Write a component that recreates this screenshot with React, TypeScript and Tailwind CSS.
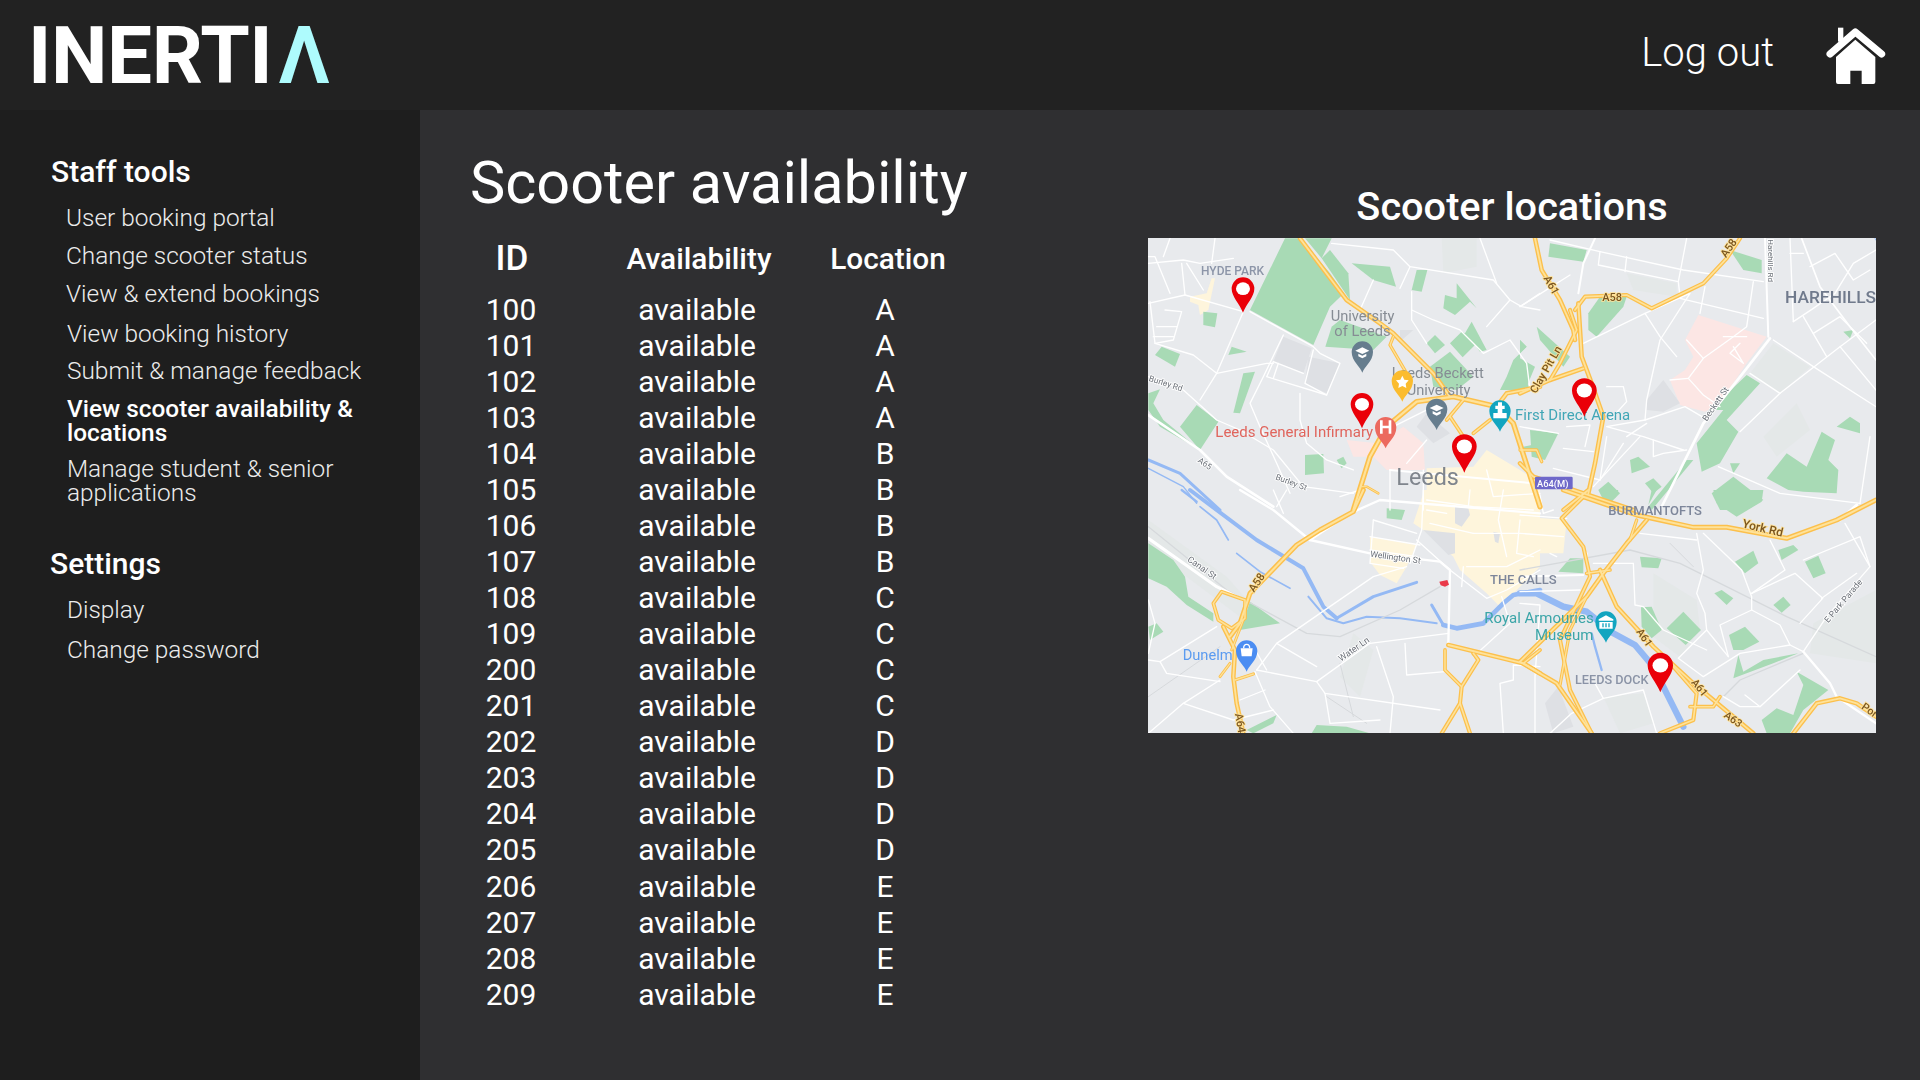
import React from "react";

const T: Record<string, string> = {
  a: "translate(-8 -8) scale(.33333)",
  b: "translate(372 -8) scale(.33333)",
  c: "translate(-8 252) scale(.33333)",
  d: "translate(372 252) scale(.33333)",
};
type Q = Partial<Record<"a" | "b" | "c" | "d", string[]>>;

const poly = (s: string) => "M" + s.trim().split(/\s+/).join(" L") + " Z";

const pale: Q = {
  a: [poly("905,25 1010,25 1010,110 910,130")],
  b: [poly("690,430 780,490 870,410 760,340"), poly("730,620 830,520 870,600 770,680"), poly("320,130 470,160 470,200 340,180")],
  c: [poly("25,90 260,260 330,340 300,380 140,260 25,170"), poly("640,430 700,480 660,620 600,560")],
  d: [poly("400,250 530,330 540,420 480,500 400,440"), poly("250,620 370,610 400,700 300,730"), poly("880,400 1068,300 1068,520 870,490")],
};
const green: Q = {
  a: [
    poly("435,25 480,25 570,130 612,190 570,230 520,345 330,240"),
    poly("495,25 575,25 545,85"),
    poly("545,85 570,60 625,130 630,210"),
    poly("575,290 600,270 740,320 700,360 556,350"),
    poly("190,245 232,250 225,292 190,285"),
    poly("265,375 275,350 320,365"),
    poly("45,375 65,350 120,372 105,410"),
    poly("310,430 345,425 300,550 280,548"),
    poly("25,490 60,478 40,520 70,570 180,660 120,590 170,525 235,575 180,660 60,590 25,540"),
    poly("495,675 550,672 552,730 495,735"),
    poly("590,690 610,680 620,700 605,715"),
    poly("635,100 750,110 768,170 700,150"),
    poly("830,120 862,120 845,185 815,180"),
    poly("915,195 950,205 950,160 1010,235 990,215 945,255 910,235"),
    poly("885,315 915,345 885,370 860,340"),
    poly("965,305 975,310 995,275 1040,360 1020,365 1005,345 968,382 930,340"),
    poly("930,365 1000,440 950,480 880,470 870,410"),
    poly("1140,330 1160,350 1120,390 1100,440 1080,480 1170,480 1140,400"),
    poly("1150,650 1200,640 1200,660 1150,660"),
  ],
  b: [
    poly("90,40 200,60 190,95 85,80"),
    poly("205,250 240,200 320,200 310,230 230,320 205,300"),
    poly("630,60 725,90 725,130 670,120"),
    poly("0,330 20,350 0,370"),
    poly("50,290 150,380 130,410 60,330"),
    poly("0,385 45,410 20,470 0,470"),
    poly("530,640 610,540 570,540 680,435 720,460 620,570 655,605 600,700 545,725"),
    poly("950,590 990,560 1020,580 1020,610"),
    poly("800,670 860,710 905,605 945,630 925,690 955,720 950,790 850,785 805,780 740,745"),
    poly("575,790 640,740 730,810 680,840 600,840"),
    poly("970,305 1000,300 990,325"),
    poly("330,690 355,680 390,710 335,730"),
    poly("30,600 115,610 75,690 35,680"),
    poly("235,780 265,755 300,790 260,830"),
    poly("375,760 400,745 425,770 400,790"),
    poly("500,690 520,690 395,840 385,830"),
    poly("630,700 660,700 640,730"),
  ],
  c: [
    poly("25,160 100,210 135,260 145,320 220,370 220,395 140,345 80,290 25,265"),
    poly("330,335 420,400 300,420"),
    poly("25,410 50,400 70,425 30,450"),
    poly("740,55 795,60 785,90 740,85"),
    poly("515,730 530,705 620,710 690,730"),
    poly("320,720 410,675 400,700 340,730"),
  ],
  d: [
    poly("580,0 730,0 725,35 650,80 590,40"),
    poly("270,0 295,0 285,25"),
    poly("395,0 410,0 385,45"),
    poly("645,215 700,182 715,220 675,250"),
    poly("775,180 820,165 835,180 785,210"),
    poly("855,215 895,197 917,250 880,265"),
    poly("360,200 425,205 415,235 365,232"),
    poly("150,205 190,205 190,250 115,245"),
    poly("583,310 605,300 640,325 620,345"),
    poly("760,345 790,320 812,345 785,368"),
    poly("363,352 395,350 425,420 395,445 365,410"),
    poly("440,415 490,365 543,420 497,465"),
    poly("627,435 675,410 718,455 670,480 640,480"),
    poly("655,495 670,545 730,510 835,490 760,520 680,550 640,565"),
    poly("725,690 770,655 820,675 850,585 830,545 925,600 850,660 810,730 740,730"),
  ],
};
const pink: Q = {
  a: [poly("620,630 710,640 790,590 850,640 855,720 740,720 700,680 640,680")],
  b: [poly("535,255 740,320 680,400 600,520 555,545 480,525 450,450 495,420 520,380 495,330")],
};
const city: Q = {
  a: [
    poly("860,715 1000,710 1040,660 1090,690 1140,720 1200,760 1200,840 860,840"),
    poly("150,200 200,190 215,145 225,145 205,240 180,255 175,225 150,215"),
  ],
  b: [poly("0,740 40,750 40,840 0,840")],
  c: [
    poly("820,100 850,10 850,0 1200,0 1200,230 1080,350 1040,310 960,240 940,200 850,120"),
    poly("690,140 830,165 800,230 770,280 720,255 690,215"),
  ],
  d: [
    poly("0,0 30,0 40,60 0,70"),
    poly("0,80 140,90 130,190 0,190"),
    poly("0,190 30,200 20,250 0,250"),
  ],
};
const grey: Q = {
  a: [poly("430,320 515,355 490,430 400,395"), poly("505,380 600,400 560,490 495,460"), poly("780,300 820,300 780,335"), poly("860,550 930,610 880,640 830,590")],
  b: [poly("380,510 430,450 480,520 430,545 380,540")],
  c: [
    poly("945,50 985,55 990,75 965,110 945,100"),
    poly("850,120 945,130 945,190 925,195"),
    poly("1060,125 1080,130 1075,160 1065,155"),
  ],
  d: [poly("75,640 115,590 160,710 100,730")],
};

const water: [string, string, number][] = [
  ["c", "M125,0 L170,35", 7],
  ["c", "M150,0 L350,150 L490,235 L550,350 L590,385", 12],
  ["c", "M590,385 L700,320 L830,277", 9],
  ["c", "M180,50 L230,90 L265,150", 5],
  ["c", "M290,190 L360,245 L450,295", 5],
  ["c", "M505,320 L560,385 L610,400 L680,380 L780,385 L890,400", 6],
  ["c", "M875,345 L910,405", 9],
  ["c", "M910,405 L950,415 L1030,400 L1090,340 L1120,315 L1200,300", 14],
  ["a", "M25,690 L120,730 L240,840", 9],
  ["a", "M25,715 L130,770 L170,820", 4],
  ["d", "M0,310 L50,310 L130,350 L200,365 L280,430 L345,465 L400,530 L440,610 L490,710", 19],
  ["d", "M215,430 L225,470 L245,540", 7],
  ["b", "M1065,25 L1095,75", 3],
];

const rail: [string, string, number][] = [
  ["c", "M25,110 L260,300 L500,430 L600,440 L780,360 L900,290", 4],
  ["c", "M560,620 L680,700", 3],
  ["c", "M600,520 L640,680", 3],
  ["c", "M25,620 L240,470", 3],
  ["d", "M0,240 L330,180 L480,220 L800,380 L1068,500", 4],
  ["d", "M450,160 L520,230", 3],
  ["d", "M610,620 L660,570 L850,490", 4],
];

const thin: Q = {
  a: [
    "M330,245 L520,350 L540,370 L600,400 L560,495 L495,460 L520,360",
    "M310,245 L230,430 L180,510",
    "M430,315 L370,440 L330,520 L360,590 L410,700 L450,790",
    "M490,430 L400,395 L380,440 L560,495",
    "M415,400 L400,445",
    "M25,100 L130,90 L180,100 L280,85",
    "M125,100 L135,195 L310,245",
    "M25,220 L135,195",
    "M25,80 L45,80 L90,190",
    "M90,25 L70,80",
    "M225,25 L215,100",
    "M30,215 L45,340 L160,375 L230,430",
    "M75,240 L125,245 L100,330 L45,340",
    "M50,290 L110,290",
    "M40,320 L100,320",
    "M140,100 L190,180",
    "M575,40 L760,60 L810,110 L1060,150 L1110,210 L1145,230 L1200,240",
    "M810,110 L780,175",
    "M700,150 L660,240",
    "M1020,25 L1070,160",
    "M815,185 L815,270 L860,340",
    "M815,240 L880,270 L960,300 L1030,370 L1110,330 L1160,400 L1170,480",
    "M1110,210 L1040,290",
    "M1140,230 L1200,190",
    "M480,490 L480,570 L500,640 L560,690 L640,720",
    "M25,440 L130,480 L230,570 L300,600 L400,660 L490,770 L640,790",
    "M230,430 L380,400 L400,400",
    "M860,630 L800,700",
    "M880,530 L760,590",
    "M750,720 L750,840",
    "M850,720 L850,840",
    "M1040,720 L1060,800 L1200,790",
  ],
  b: [
    "M90,30 L240,65 L490,120 L730,155",
    "M240,65 L235,105 L475,155",
    "M320,80 L315,125",
    "M500,25 L475,155 L480,200",
    "M555,170 L540,250",
    "M480,205 L730,265",
    "M700,155 L680,290 L640,320 L550,385 L505,445 L550,495 L600,530",
    "M610,320 L680,320",
    "M640,350 L670,400 L630,370 L660,340",
    "M500,330 L550,385",
    "M505,445 L450,450",
    "M190,340 L375,250 L420,320 L470,380",
    "M375,250 L510,190 L420,330 L380,510 L375,570 L495,530 L555,565",
    "M375,570 L260,590 L370,620 L490,660",
    "M760,330 L880,410 L1068,530",
    "M660,605 L780,490 L960,350 L1068,270",
    "M690,430 L780,490",
    "M820,275 L880,235 L945,190 L1000,100 L1068,60",
    "M850,260 L920,380",
    "M880,310 L960,260 L1040,340",
    "M960,350 L1068,480",
    "M810,25 L820,275",
    "M810,70 L850,70",
    "M870,110 L945,70 L1000,150 L1050,120",
    "M595,710 L780,790 L1020,820",
    "M0,230 L150,135",
    "M140,590 L210,585 L195,650",
    "M0,590 L115,610",
    "M130,655 L220,665",
    "M100,715 L240,750 L260,620",
    "M240,750 L310,640",
    "M320,620 L380,580",
    "M360,620 L220,770",
    "M400,630 L400,680 L430,670 L500,660",
    "M260,470 L310,470 L320,515 L270,570",
    "M1050,620 L1020,820",
  ],
  c: [
    "M400,0 L430,70",
    "M600,20 L660,0",
    "M850,0 L845,120 L810,220",
    "M830,150 L930,240 L1040,325 L1100,300 L1200,240",
    "M540,370 L700,260 L800,230",
    "M540,370 L410,460 L350,540",
    "M350,540 L530,575 L690,460 L925,430",
    "M25,510 L60,515 L230,410",
    "M60,515 L80,550 L240,575",
    "M240,570 L130,640 L25,730",
    "M345,545 L390,650 L460,730",
    "M130,640 L280,690 L400,660",
    "M300,630 L375,600",
    "M410,460 L530,530",
    "M710,470 L760,620 L750,730",
    "M795,460 L800,555 L915,545",
    "M530,575 L555,610 L900,660",
    "M555,610 L570,700 L720,690",
    "M1085,320 L1110,400 L1000,500",
    "M1200,530 L1120,525 L1120,570 L1080,580 L1090,730",
    "M700,90 L830,130",
    "M700,90 L690,220 L790,235",
    "M690,140 L840,165",
    "M690,180 L830,200",
    "M440,0 L410,50",
    "M340,470 L380,540",
    "M25,330 L45,400 L25,490",
    "M860,60 L920,70",
    "M860,30 L1000,50 L1180,60",
    "M1090,0 L1075,90 L1100,200",
    "M1140,90 L1130,190 L1180,200",
    "M980,230 L1100,230 L1200,180",
    "M970,230 L965,290",
    "M990,0 L985,50",
    "M1000,130 L1140,130",
    "M870,100 L1000,130",
  ],
  d: [
    "M975,100 L1050,230 L920,380 L850,485",
    "M530,130 L550,240 L530,310 L555,370 L560,420 L625,500",
    "M560,420 L475,505 L550,560 L660,490 L810,465 L850,485",
    "M550,130 L665,240 L695,320 L695,360 L600,405 L625,500",
    "M850,210 L1020,140 L1050,230",
    "M695,310 L825,250 L908,325 L840,400",
    "M750,150 L795,240 L695,310",
    "M905,325 L1010,250",
    "M695,360 L780,405 L810,465",
    "M340,220 L345,345 L370,350 L430,420 L560,480",
    "M220,220 L340,220",
    "M0,305 L180,300",
    "M0,340 L60,345 L45,560 L45,730",
    "M250,625 L370,600 L410,730",
    "M225,580 L250,625 L155,670 L90,730",
    "M610,620 L660,650 L720,650 L840,540",
    "M360,130 L530,150",
    "M675,615 L720,650",
    "M60,15 L70,70 L100,60",
    "M0,75 L140,85",
    "M0,130 L130,140",
    "M90,190 L110,200",
  ],
};
const thick: [string, string, number][] = [
  ["a", "M25,555 L180,660 L260,740 L400,830", 8],
  ["a", "M750,720 L1180,760", 6],
  ["b", "M750,325 L680,415 L550,580 L420,840", 8],
  ["b", "M735,25 L745,320", 6],
  ["b", "M845,25 L900,170 L990,290 L1068,390", 5],
  ["b", "M225,25 L190,100 L175,190", 6],
  ["c", "M25,145 L230,290 L310,330", 9],
  ["c", "M300,0 L400,60 L510,150 L690,190 L900,215 L930,240 L925,460", 7],
  ["c", "M510,150 L630,70 L720,30 L1200,70", 7],
  ["d", "M0,260 L190,255", 6],
  ["d", "M200,190 L205,250", 6],
  ["d", "M850,485 L930,580 L950,620 L1068,700", 7],
  ["d", "M1010,45 L960,90", 9],
];
const yellow: [string, string, number][] = [
  ["a", "M480,25 L620,210 L720,280 L760,310 L880,430 L930,500", 11],
  ["a", "M760,320 L750,345 L800,430", 8],
  ["a", "M640,840 L690,680 L740,590 L830,515 L940,500 L1070,530 L1120,580 L1200,830", 13],
  ["a", "M1070,530 L1100,490 L1200,470", 11],
  ["a", "M930,560 L970,620", 9],
  ["a", "M1000,610 L1050,570", 9],
  ["a", "M920,570 L970,510", 9],
  ["a", "M665,770 L680,770 L715,790", 6],
  ["b", "M45,25 L65,120 L120,210 L160,300 L165,330", 11],
  ["b", "M0,490 L90,450 L190,415", 11],
  ["b", "M175,220 L185,380 L215,460 L250,560 L225,700 L205,790", 11],
  ["b", "M165,240 L195,200 L320,195 L395,235 L550,160 L620,85 L660,25", 10],
  ["b", "M150,240 L170,300 L120,400 L90,450", 10],
  ["b", "M0,700 L40,740 L130,770 L340,840", 11],
  ["b", "M130,840 L205,780", 10],
  ["b", "M0,660 L50,660 L65,695", 8],
  ["c", "M670,0 L640,65 L540,120 L470,165 L330,310 L300,400 L270,440", 12],
  ["c", "M315,330 L245,305 L220,340 L235,390 L275,415 L315,385 L315,330", 9],
  ["c", "M250,410 L285,480 L280,560 L290,640 L310,730", 11],
  ["c", "M310,390 L275,480", 7],
  ["c", "M240,560 L270,520", 7],
  ["c", "M285,570 L340,552", 8],
  ["c", "M925,465 L1150,520 L1200,550", 11],
  ["c", "M915,480 L915,540 L965,590", 9],
  ["c", "M1000,490 L1015,510 L965,590 L960,640 L905,730", 10],
  ["c", "M960,640 L990,730", 10],
  ["c", "M1150,520 L1200,480", 9],
  ["d", "M130,0 L350,75 L520,112 L620,112 L800,145 L950,90 L1068,30", 12],
  ["d", "M190,20 L125,85 L190,170 L210,260 L120,450 L150,600 L215,730", 10],
  ["d", "M380,90 L320,160 L250,250 L200,320 L0,515", 11],
  ["d", "M200,250 L270,240", 9],
  ["d", "M240,240 L290,350 L400,470 L520,580 L700,730", 11],
  ["d", "M0,515 L110,580 L215,730", 11],
  ["d", "M120,585 L150,420 L200,320", 8],
  ["d", "M460,530 L530,610 L520,690 L420,730", 10],
  ["d", "M510,650 L580,650 L600,620", 9],
  ["d", "M820,730 L890,640 L960,625 L1010,640 L1068,680", 11],
  ["d", "M350,90 L330,150", 8],
];

function Fill({ q, color }: { q: Q; color: string }) {
  return (
    <>
      {Object.entries(q).map(([k, list]) => (
        <g key={k} transform={T[k]} fill={color}>
          {list!.map((d, i) => (
            <path key={i} d={d} />
          ))}
        </g>
      ))}
    </>
  );
}

function Strokes({ list, color, k = 1 }: { list: [string, string, number][]; color: string; k?: number }) {
  return (
    <>
      {list.map(([q, d, w], i) => (
        <path key={i} transform={T[q]} d={d} fill="none" stroke={color} strokeWidth={w * k} strokeLinejoin="round" strokeLinecap="round" />
      ))}
    </>
  );
}

function Pin({ q, x, y, s = 1 }: { q: string; x: number; y: number; s?: number }) {
  return (
    <g transform={T[q]}>
      <g transform={`translate(${x} ${y}) scale(${s})`}>
        <path d="M0,0 C-10,-27 -34,-48 -34,-72 A34,34 0 1 1 34,-72 C34,-48 10,-27 0,0Z" fill="#ea0009" />
        <ellipse cx="0" cy="-72" rx="21" ry="19" fill="#fff" />
      </g>
    </g>
  );
}

function Poi({ q, x, y, color, children }: { q: string; x: number; y: number; color: string; children?: React.ReactNode }) {
  return (
    <g transform={T[q]}>
      <g transform={`translate(${x} ${y})`}>
        <path d="M0,0 C-4,-16 -32,-34 -32,-62 A32,32 0 1 1 32,-62 C32,-34 4,-16 0,0Z" fill={color} />
        {children}
      </g>
    </g>
  );
}

const Cap = () => (
  <g fill="#fff">
    <path d="M-21,-66 L0,-76 L21,-66 L0,-56Z" />
    <path d="M-12,-57 L0,-51 L12,-57 L12,-49 L0,-43 L-12,-49Z" />
  </g>
);

type L = [string, string, number, number, number, string, number?, number?];
const labels: L[] = [
  ["a", "Burley Rd", 25, 452, 25, "#6b7078", 18],
  ["a", "A65", 172, 695, 25, "#6b7078", 35],
  ["a", "Burley St", 405, 748, 25, "#6b7078", 20],
  ["c", "Canal St", 140, 212, 27, "#6b7078", 35],
  ["c", "Wellington St", 690, 200, 26, "#6b7078", 8],
  ["c", "Water Ln", 603, 515, 27, "#6b7078", -35],
  ["b", "Beckett St", 560, 575, 26, "#6b7078", -55],
  ["b", "Harehills Rd", 745, 28, 24, "#6b7078", 90],
  ["d", "E Park Parade", 925, 400, 26, "#6b7078", -50],
];
const brown: L[] = [
  ["b", "A61", 70, 145, 33, "#7a5520", 60, 500],
  ["b", "A58", 247, 212, 33, "#7a5520", 0, 500],
  ["b", "A58", 618, 85, 33, "#7a5520", -55, 500],
  ["b", "Clay Pit Ln", 48, 492, 33, "#7a5520", -60, 500],
  ["c", "A58", 342, 308, 33, "#7a5520", -55, 500],
  ["c", "A64", 285, 672, 33, "#7a5520", 80, 500],
  ["d", "A61", 348, 425, 32, "#7a5520", 55, 500],
  ["d", "A61", 512, 578, 32, "#7a5520", 50, 500],
  ["d", "A63", 610, 680, 32, "#7a5520", 35, 500],
  ["d", "York Rd", 665, 112, 36, "#7a5520", 13, 500],
  ["d", "Por", 1022, 655, 32, "#7a5520", 35, 500],
];
const plain: L[] = [
  ["a", "HYDE PARK", 183, 135, 36, "#8c95a8", 0, 500],
  ["a", "Leeds General Infirmary", 226, 621, 45, "#e0655d"],
  ["a", "Leeds", 769, 766, 70, "#7f858d"],
  ["b", "HAREHILLS", 795, 220, 52, "#707a8c", 0, 500],
  ["b", "First Direct Arena", -15, 570, 45, "#41a6b6"],
  ["d", "BURMANTOFTS", 265, 76, 39, "#7d869a", 0, 500],
  ["c", "THE CALLS", 1050, 282, 39, "#7d869a", 0, 500],
  ["c", "Royal Armouries", 1033, 400, 45, "#3ba5a8"],
  ["d", "Museum", 45, 450, 45, "#3ba5a8"],
  ["c", "Dunelm", 128, 511, 44, "#5b9bf0"],
  ["d", "LEEDS DOCK", 165, 582, 38, "#8a93a6", 0, 500],
  ["a", "University", 572, 272, 44, "#868c94"],
  ["a", "of Leeds", 583, 318, 44, "#868c94"],
  ["a", "Leeds Beckett", 755, 445, 44, "#868c94"],
  ["a", "University", 800, 495, 44, "#868c94"],
];

function Label({ l, halo }: { l: L; halo?: string }) {
  const [q, t, x, y, s, c, r = 0, w = 400] = l;
  return (
    <g transform={T[q]}>
      <text
        transform={`translate(${x} ${y}) rotate(${r})`}
        fontSize={s}
        fontWeight={w}
        fill={c}
        stroke={halo}
        strokeWidth={halo ? 5 : 0}
        paintOrder="stroke"
        fontFamily="Roboto, sans-serif"
      >
        {t}
      </text>
    </g>
  );
}

function LeedsMap() {
  return (
    <svg viewBox="0 0 728 495" width={728} height={495} className="block blur-[0.4px]">
      <rect width="728" height="495" fill="#e8eaed" />
      <Fill q={pale} color="#e4e8e8" />
      <Fill q={pink} color="#fce6e4" />
      <Fill q={city} color="#fef5dc" />
      <Fill q={grey} color="#dee0e4" />
      <Fill q={green} color="#a8dab5" />
      <Strokes list={water} color="#94b9f4" />
      <Strokes list={rail} color="#d6d9dc" />
      {Object.entries(thin).map(([k, list]) => (
        <g key={k} transform={T[k]} fill="none" stroke="#fff" strokeWidth={4} strokeLinejoin="round" strokeLinecap="round">
          {list!.map((d, i) => (
            <path key={i} d={d} />
          ))}
        </g>
      ))}
      <Strokes list={thick} color="#fff" />
      <Strokes list={yellow} color="#fcc04c" k={1.25} />
      <Strokes list={yellow} color="#fee29a" k={0.5} />
      {labels.map((l, i) => (
        <Label key={i} l={l} halo="#ffffff" />
      ))}
      {brown.map((l, i) => (
        <Label key={i} l={l} halo="#fee29a" />
      ))}
      {plain.map((l, i) => (
        <Label key={i} l={l} />
      ))}
      <g transform={T.b}>
        <rect x="45" y="740" width="113" height="38" rx="4" fill="#6e68c9" />
        <text x="51" y="770" fontSize="28" fontWeight={500} fill="#fff" fontFamily="Roboto, sans-serif">
          A64(M)
        </text>
      </g>
      <Poi q="a" x={667} y={428} color="#667d8e"><Cap /></Poi>
      <Poi q="a" x={787} y={515} color="#fbbc2e">
        <path d="M0,-78 L6,-66 L19,-64 L10,-54 L12,-41 L0,-47 L-12,-41 L-10,-54 L-19,-64 L-6,-66Z" fill="#fff" />
      </Poi>
      <Poi q="a" x={890} y={600} color="#667d8e"><Cap /></Poi>
      <Poi q="a" x={1080} y={605} color="#12a5c0">
        <path d="M-6,-88 H6 V-78 H14 V-68 H7 V-56 H20 V-40 H-20 V-56 H-7 V-68 H-14 V-78 H-6Z" fill="#fff" />
      </Poi>
      <Poi q="a" x={737} y={655} color="#ec6a5f">
        <path d="M-17,-84 H-9 V-68 H9 V-84 H17 V-44 H9 V-60 H-9 V-44 H-17Z" fill="#fff" />
      </Poi>
      <Poi q="d" x={258} y={458} color="#12a5c0">
        <path d="M0,-82 L22,-70 V-66 H-22 V-70Z M-20,-62 H20 V-42 H-20Z" fill="#fff" />
        <path d="M-9,-58 V-46 M0,-58 V-46 M9,-58 V-46" stroke="#12a5c0" strokeWidth="4" />
      </Poi>
      <Poi q="c" x={320} y={545} color="#4b8df2">
        <path d="M-18,-70 H18 L15,-46 H-15Z" fill="#fff" />
        <path d="M-9,-70 C-9,-86 9,-86 9,-70" fill="none" stroke="#fff" strokeWidth="4" />
      </Poi>
      <g transform={T.c}>
        <path d="M898,275 L922,270 L927,284 L915,290 L902,286Z" fill="#ea3a4a" />
      </g>
      <Pin q="a" x={309} y={248} />
      <Pin q="a" x={666} y={595} />
      <Pin q="a" x={973} y={728} s={1.09} />
      <Pin q="b" x={193} y={560} s={1.09} />
      <Pin q="d" x={421} y={607} s={1.12} />
    </svg>
  );
}

function HomeIcon() {
  return (
    <svg viewBox="800 70 180 180" width={60} height={60} className="block">
      <path d="M836,78 H852 V120 H836Z" fill="#fff" />
      <path d="M812,157 L888,91 L967,157" fill="none" stroke="#fff" strokeWidth={21} strokeLinecap="round" strokeLinejoin="round" />
      <path
        fillRule="evenodd"
        d="M888,114 L948,166 V241 Q948,247 942,247 H836 Q830,247 830,241 V166Z M873,207 V247 H907 V207Z"
        fill="#fff"
      />
    </svg>
  );
}

const nav1 = [
  ["User booking portal", "mt-[16px] ml-[66px]", false],
  ["Change scooter status", "mt-[14px] ml-[66px]", false],
  ["View & extend bookings", "mt-[14px] ml-[66px]", false],
  ["View booking history", "mt-[16px] ml-[67px]", false],
  ["Submit & manage feedback", "mt-[13px] ml-[67px]", false],
  ["View scooter availability & locations", "mt-[14px] ml-[67px]", true],
  ["Manage student & senior applications", "mt-[12px] ml-[67px]", false],
] as const;

const ids = [100, 101, 102, 103, 104, 105, 106, 107, 108, 109, 200, 201, 202, 203, 204, 205, 206, 207, 208, 209];
const locs = "AAAABBBBCCCCDDDDEEEE";

export default function App() {
  return (
    <div className="w-[1920px] h-[1080px] overflow-hidden flex flex-col bg-[#2f2f31] text-white font-['Roboto',sans-serif]">
      <header className="h-[110px] shrink-0 bg-[#222222] flex items-center justify-between pl-[28px] pr-[34px]">
        <div className="text-[80px] leading-[110px] font-bold tracking-[-0.4px] pt-[1px]">
          INERTI<span className="text-[#aefbfd] font-semibold ml-[6px]">Λ</span>
        </div>
        <div className="flex items-center">
          <span className="text-[40px] leading-[48px] font-light mr-[52px] mb-[4px]">Log out</span>
          <HomeIcon />
        </div>
      </header>
      <div className="flex flex-1 min-h-0">
        <aside className="w-[420px] shrink-0 bg-[#1e1e1e] pt-[44px]">
          <h2 className="ml-[51px] text-[30px] leading-[36px] font-medium">Staff tools</h2>
          {nav1.map(([t, c, active]) => (
            <div key={t} className={`${c} mr-[45px] text-[24.4px] leading-[24px] ${active ? "font-medium" : "font-light text-[#ececec]"}`}>
              {t}
            </div>
          ))}
          <h2 className="mt-[41px] ml-[50px] text-[30px] leading-[36px] font-medium">Settings</h2>
          <div className="mt-[16px] ml-[67px] text-[24.4px] leading-[24px] font-light text-[#ececec]">Display</div>
          <div className="mt-[16px] ml-[67px] text-[24.4px] leading-[24px] font-light text-[#ececec]">Change password</div>
        </aside>
        <main className="flex-1 flex pt-[36px]">
          <section className="w-[728px] shrink-0 pl-[50px]">
            <h1 className="text-[59.4px] leading-[74px] font-normal">Scooter availability</h1>
            <div className="mt-[17px] grid grid-cols-[84px_290px_88px] text-center">
              <div className="text-[35px] leading-[44px] font-medium">ID</div>
              <div className="text-[29.8px] leading-[44px] font-medium">Availability</div>
              <div className="flex justify-center whitespace-nowrap text-[29.8px] leading-[44px] font-medium">Location</div>
            </div>
            <div className="mt-[11px] grid grid-cols-[82px_290px_86px] text-center text-[30px] leading-[36.03px]">
              {ids.map((id, i) => (
                <React.Fragment key={id}>
                  <div>{id}</div>
                  <div>available</div>
                  <div>{locs[i]}</div>
                </React.Fragment>
              ))}
            </div>
          </section>
          <section className="w-[728px] shrink-0 pt-[37px]">
            <h2 className="text-center text-[39.7px] leading-[48px] font-medium">Scooter locations</h2>
            <div className="mt-[7px]">
              <LeedsMap />
            </div>
          </section>
        </main>
      </div>
    </div>
  );
}
